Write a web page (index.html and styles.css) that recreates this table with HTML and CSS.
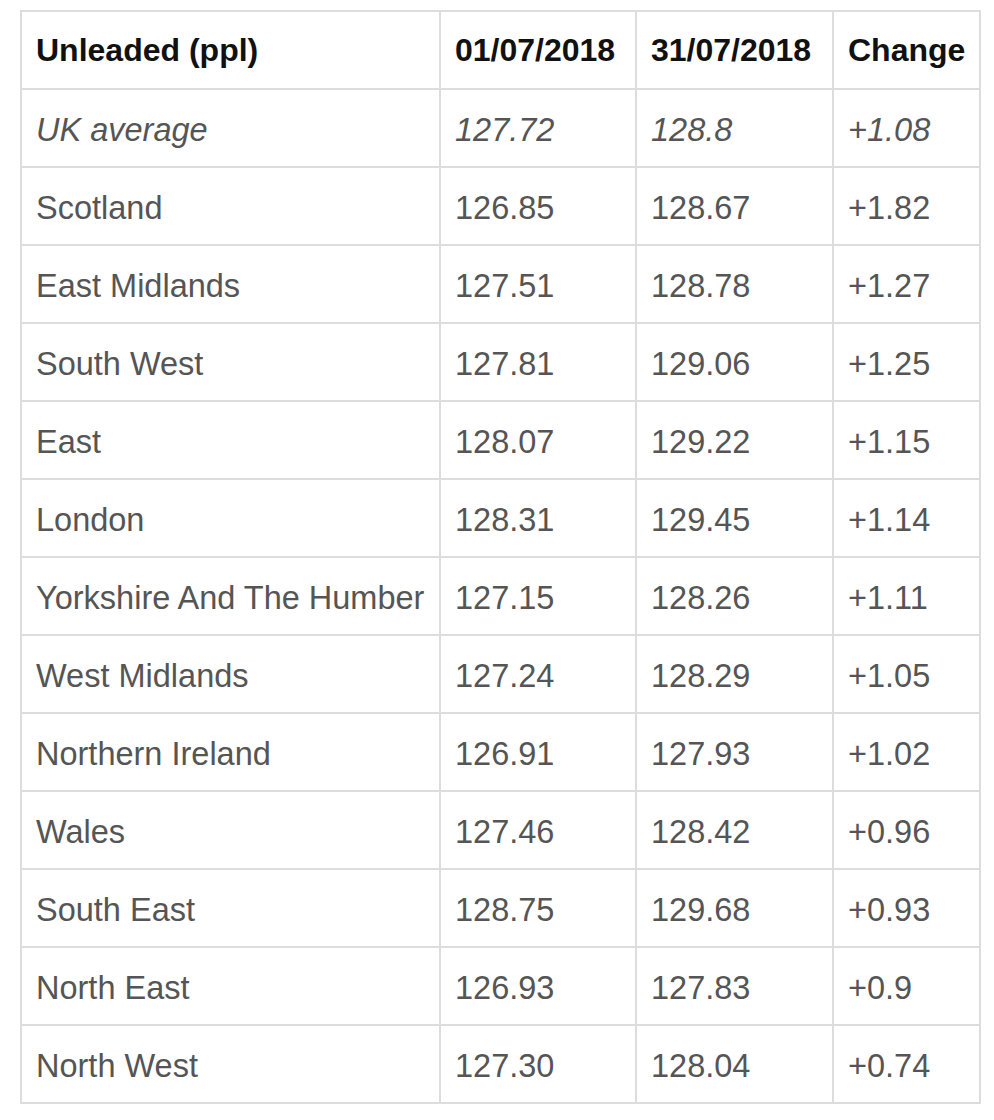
FILE: index.html
```html
<!DOCTYPE html>
<html>
<head>
<meta charset="utf-8">
<link rel="stylesheet" href="styles.css">
</head>
<body>
<table class="prices">
  <colgroup>
    <col class="c-region">
    <col class="c-date1">
    <col class="c-date2">
    <col class="c-change">
  </colgroup>
  <thead>
    <tr><th>Unleaded (ppl)</th><th>01/07/2018</th><th>31/07/2018</th><th>Change</th></tr>
  </thead>
  <tbody>
    <tr class="avg"><td>UK average</td><td>127.72</td><td>128.8</td><td>+1.08</td></tr>
    <tr><td>Scotland</td><td>126.85</td><td>128.67</td><td>+1.82</td></tr>
    <tr><td>East Midlands</td><td>127.51</td><td>128.78</td><td>+1.27</td></tr>
    <tr><td>South West</td><td>127.81</td><td>129.06</td><td>+1.25</td></tr>
    <tr><td>East</td><td>128.07</td><td>129.22</td><td>+1.15</td></tr>
    <tr><td>London</td><td>128.31</td><td>129.45</td><td>+1.14</td></tr>
    <tr><td>Yorkshire And The Humber</td><td>127.15</td><td>128.26</td><td>+1.11</td></tr>
    <tr><td>West Midlands</td><td>127.24</td><td>128.29</td><td>+1.05</td></tr>
    <tr><td>Northern Ireland</td><td>126.91</td><td>127.93</td><td>+1.02</td></tr>
    <tr><td>Wales</td><td>127.46</td><td>128.42</td><td>+0.96</td></tr>
    <tr><td>South East</td><td>128.75</td><td>129.68</td><td>+0.93</td></tr>
    <tr><td>North East</td><td>126.93</td><td>127.83</td><td>+0.9</td></tr>
    <tr><td>North West</td><td>127.30</td><td>128.04</td><td>+0.74</td></tr>
  </tbody>
</table>
</body>
</html>
```
FILE: styles.css
```css
html, body {
  margin: 0;
  padding: 0;
  background: #fff;
}
body {
  padding: 10px 0 0 20px;
  font-family: "Liberation Sans", Arial, sans-serif;
}
.prices {
  border-collapse: collapse;
  table-layout: fixed;
  width: 961px;
}
.c-region { width: 419px; }
.c-date1 { width: 196px; }
.c-date2 { width: 197px; }
.c-change { width: 147px; }
.prices th,
.prices td {
  border: 2px solid #dddddd;
  height: 78px;
  padding: 4px 0 0 14px;
  box-sizing: border-box;
  text-align: left;
  vertical-align: middle;
  font-size: 32.5px;
  white-space: nowrap;
}
.prices th {
  color: #111;
  font-weight: bold;
  font-size: 32px;
  padding-top: 0;
}
.prices td {
  color: #555;
  font-weight: normal;
}
.prices tr.avg td {
  font-style: italic;
}
```
